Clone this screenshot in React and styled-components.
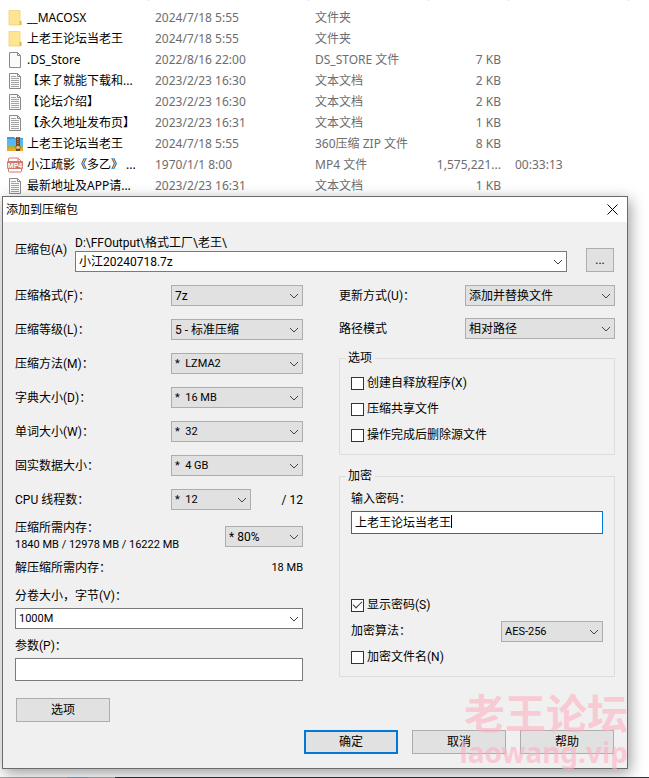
import React, { useId, useState } from 'react';
import styled, { createGlobalStyle, css } from 'styled-components';

const GlobalStyle = createGlobalStyle`
  * {
    box-sizing: border-box;
  }

  body {
    margin: 0;
    background: #fff;
    color: #000;
    font-family: Roboto, "Noto Sans CJK SC", sans-serif;
    font-size: 12px;
    line-height: 16px;
  }

  input, select, button {
    font: inherit;
    color: inherit;
  }
`;

const Page = styled.div`
  overflow: hidden;
`;

/* ---- file list ---- */

const HeaderEdge = styled.div`
  display: grid;
  grid-template-columns: 149px 160px 120px 80px 120px;
  height: 7px;
`;

const Tick = styled.span`
  height: 1px;
  border-right: 1px solid #d9d9d9;
`;

const FileTable = styled.table`
  width: 100%;
  table-layout: fixed;
  border-collapse: collapse;
  font-family: "Noto Sans", "Noto Sans CJK SC", sans-serif;
  line-height: 20px;
`;

const Col = styled.col`
  width: ${({ $width }) => $width};
`;

const Cell = styled.td`
  height: 21px;
  padding: 0 7px;
  color: #6d6d6d;
  white-space: nowrap;
  text-align: ${({ $align }) => $align || 'left'};
`;

const NameCell = styled(Cell)`
  color: #000;
`;

const FileName = styled.span`
  display: flex;
  align-items: center;
  gap: 4px;
`;

const FileIcon = styled.svg`
  flex: none;
  width: 16px;
  height: 16px;
`;

/* ---- dialog ---- */

const Dialog = styled.section`
  position: relative;
  margin: 0 21px 8px 2px;
  background: #f0f0f0;
  border: 1px solid #6b6b6b;
  box-shadow: 2px 4px 14px rgba(0, 0, 0, 0.4);
`;

const TitleBar = styled.header`
  display: flex;
  align-items: center;
  justify-content: space-between;
  height: 25px;
  padding: 0 9px 0 3px;
  background: #fff;
`;

const Title = styled.h1`
  margin: 0;
  font-size: 12px;
  font-weight: 400;
`;

const CloseButton = styled.button`
  display: flex;
  padding: 0;
  border: 0;
  background: none;
`;

const Form = styled.form`
  padding: 13px 12px 14px;
`;

const ArchiveRow = styled.div`
  display: flex;
  align-items: flex-end;
  padding-right: 1px;
`;

const ArchiveLabel = styled.label`
  width: 60px;
  align-self: flex-start;
  line-height: 30px;
`;

const ArchiveField = styled.div`
  flex: 1;
  margin-right: 19px;
`;

const Columns = styled.div`
  display: grid;
  grid-template-columns: 288fr 276fr;
  gap: 36px;
  margin-top: 6px;
`;

const Column = styled.div`
  display: flex;
  flex-direction: column;
`;

const Row = styled.div`
  display: flex;
  justify-content: space-between;
  height: ${({ $height }) => $height || 34}px;
  padding-top: 7px;
  line-height: 22px;
`;

const SplitRow = styled.div`
  display: flex;
  align-items: center;
  justify-content: space-between;
  margin-top: ${({ $gap }) => $gap || 0}px;
`;

const ThreadGroup = styled.div`
  display: flex;
  justify-content: space-between;
  width: 132px;
`;

const Small = styled.span`
  font-size: 11px;
`;

const SelectBox = styled.span`
  position: relative;
  display: block;
  flex: none;
  width: ${({ $width }) => $width || '100%'};
  height: 21px;
`;

const StyledSelect = styled.select`
  display: block;
  appearance: none;
  width: 100%;
  height: 21px;
  padding: 1px 20px 0 3px;
  border: 1px solid #adadad;
  border-radius: 0;
  outline: 0;
  background: #e1e1e1;
  font-size: ${({ $small }) => ($small ? 11 : 12)}px;
  line-height: 18px;

  ${({ $editable }) => $editable && css`
    background: #fff;
    border-color: #7a7a7a;
  `}
`;

const Chevron = styled.svg`
  position: absolute;
  top: 8px;
  right: 4px;
  width: 10px;
  height: 6px;
  pointer-events: none;
`;

const TextInput = styled.input`
  display: block;
  width: 100%;
  height: 23px;
  padding: 0 3px 2px;
  border: 1px solid ${({ $active }) => ($active ? '#0078d7' : '#7a7a7a')};
  border-radius: 0;
  outline: 0;
  background: #fff;
  caret-color: transparent;
`;

const InputWrap = styled.div`
  position: relative;
`;

const Caret = styled.span`
  position: absolute;
  top: 4px;
  left: calc(4px + 8em);
  width: 1px;
  height: 13px;
  background: #000;
`;

const Field = styled.div`
  display: flex;
  flex-direction: column;
  gap: 4px;
  margin-top: ${({ $gap }) => $gap}px;
`;

const Group = styled.fieldset`
  min-width: 0;
  margin: ${({ $gap }) => $gap}px 0 0;
  padding: 4px 11px 6px;
  border: 1px solid #dcdcdc;
`;

const Legend = styled.legend`
  margin-left: -5px;
  padding: 0 3px 0 2px;
`;

const CheckLabel = styled.label`
  display: flex;
  align-items: center;
  gap: 3px;
  height: 26px;
`;

const CheckBox = styled.input`
  appearance: none;
  flex: none;
  width: 13px;
  height: 13px;
  margin: 0;
  border: 1px solid #333;
  background: #fff;
  display: grid;
  place-items: center;

  &:checked::before {
    content: "";
    width: 8px;
    height: 4px;
    margin-bottom: 3px;
    border: solid #333;
    border-width: 0 0 1px 1px;
    transform: rotate(-45deg);
  }
`;

const AlgorithmRow = styled(SplitRow)`
  height: 26px;
`;

const Button = styled.button`
  width: ${({ $width }) => $width || 94}px;
  height: 24px;
  padding: 0;
  border: ${({ $primary }) => ($primary ? '2px solid #0078d7' : '1px solid #adadad')};
  background: #e1e1e1;
`;

const OptionsBar = styled.div`
  padding: 17px 0 0 1px;
`;

const Footer = styled.footer`
  display: flex;
  justify-content: flex-end;
  gap: 14px;
  margin-top: 8px;
  padding-right: 1px;
`;

const Watermark = styled.div`
  position: absolute;
  right: -1px;
  bottom: -4px;
  color: rgba(255, 176, 194, 0.6);
  font-weight: 700;
  text-align: right;
  pointer-events: none;
`;

const WatermarkName = styled.div`
  font-family: "Noto Sans CJK SC", sans-serif;
  font-size: 41px;
  line-height: 42px;
`;

const WatermarkSite = styled.div`
  font-family: "Noto Sans", sans-serif;
  font-size: 28px;
  line-height: 40px;
`;

const Taskbar = styled.div`
  height: 1px;
  background: linear-gradient(to right, #a9a9a9 67px, #7f9db5 67px 88px, #a9a9a9 88px 115px, #2c3437 115px);
`;

/* ---- icons ---- */

const FolderIcon = () => (
  <FileIcon viewBox="0 0 16 16">
    <path d="M2 .5h11v9.5l1.5 1V15H2z" fill="#ffe591" />
    <path d="M2 .5h11v14.5H2z" fill="none" stroke="#f0d275" strokeWidth=".8" />
    <path d="M12.5 11h2v4h-2z" fill="#e8bf4d" />
  </FileIcon>
);

const PageIcon = ({ lines }) => (
  <FileIcon viewBox="0 0 16 16">
    <path d="M2.5.5h8l3 3v12h-11z" fill="#fafafa" stroke="#8a8a8a" />
    <path d="M10.5.5v3h3" fill="none" stroke="#8a8a8a" />
    {lines && <path d="M4 3.5h5M4 5.500h8M4 7.500h8M4 9.500h8M4 11.500h8M4 13.500h8" stroke="#a3a3a3" />}
  </FileIcon>
);

const ZipIcon = () => (
  <FileIcon viewBox="0 0 16 16">
    <path d="M0 1h7l1 1h8v8H0z" fill="#3c9be0" />
    <path d="M0 3h16v7H0z" fill="#56b9f5" />
    <path d="M0 10h16v2H0z" fill="#8ac43f" />
    <path d="M0 12h16v3H0z" fill="#eda52d" />
    <path d="M9 1h4v14H9z" fill="#7a4a25" />
    <path d="M11 1v9" stroke="#d8b070" strokeDasharray="1 1" />
    <path d="M9 10h4v3H9z" fill="#f6dc8a" stroke="#6b4520" strokeWidth=".6" />
  </FileIcon>
);

const Mp4Icon = () => (
  <FileIcon viewBox="0 0 16 16">
    <path d="M1.5 5V2a1 1 0 0 1 1-1H11l3.5 3.5V5M1.500 11v3a1 1 0 0 0 1 1h11a1 1 0 0 0 1-1v-3" fill="#fff" stroke="#d3796a" />
    <path d="M11 1v3.5h3.500" fill="none" stroke="#d3796a" />
    <rect y="4" width="16" height="8" rx="1" fill="#d3796a" />
    <text x="8" y="10.500" fontSize="7" fontWeight="700" fontFamily="Liberation Sans, sans-serif" textAnchor="middle" fill="#fff">MP4</text>
  </FileIcon>
);

const icons = {
  folder: <FolderIcon />,
  blank: <PageIcon />,
  text: <PageIcon lines />,
  zip: <ZipIcon />,
  mp4: <Mp4Icon />,
};

const files = [
  { icon: 'folder', name: '__MACOSX', date: '2024/7/18 5:55', type: '文件夹' },
  { icon: 'folder', name: '上老王论坛当老王', date: '2024/7/18 5:55', type: '文件夹' },
  { icon: 'blank', name: '.DS_Store', date: '2022/8/16 22:00', type: 'DS_STORE 文件', size: '7 KB' },
  { icon: 'text', name: '【来了就能下载和...', date: '2023/2/23 16:30', type: '文本文档', size: '2 KB' },
  { icon: 'text', name: '【论坛介绍】', date: '2023/2/23 16:30', type: '文本文档', size: '2 KB' },
  { icon: 'text', name: '【永久地址发布页】', date: '2023/2/23 16:31', type: '文本文档', size: '1 KB' },
  { icon: 'zip', name: '上老王论坛当老王', date: '2024/7/18 5:55', type: '360压缩 ZIP 文件', size: '8 KB' },
  { icon: 'mp4', name: '小江疏影《多乙》 ...', date: '1970/1/1 8:00', type: 'MP4 文件', size: '1,575,221...', length: '00:33:13' },
  { icon: 'text', name: '最新地址及APP请...', date: '2023/2/23 16:31', type: '文本文档', size: '1 KB' },
];

const compression = [
  { label: '压缩格式(F)：', value: '7z' },
  { label: '压缩等级(L)：', value: '5 - 标准压缩' },
  { label: '压缩方法(M)：', value: '*\u00a0\u00a0LZMA2', small: true },
  { label: '字典大小(D)：', value: '*\u00a0\u00a016 MB', small: true },
  { label: '单词大小(W)：', value: '*\u00a0\u00a032', small: true },
  { label: '固实数据大小：', value: '*\u00a0\u00a04 GB', small: true },
];

const Select = ({ id, value, width, small, editable }) => (
  <SelectBox $width={width}>
    <StyledSelect id={id} $small={small} $editable={editable}>
      <option>{value}</option>
    </StyledSelect>
    <Chevron viewBox="0 0 10 6">
      <path d="M1 1l4 4 4-4" fill="none" stroke="#444" />
    </Chevron>
  </SelectBox>
);

const SelectRow = ({ label, value, width, small, height }) => {
  const id = useId();
  return (
    <Row $height={height}>
      <label htmlFor={id}>{label}</label>
      <Select id={id} value={value} width={width} small={small} />
    </Row>
  );
};

const Check = ({ label, defaultChecked }) => (
  <CheckLabel>
    <CheckBox type="checkbox" defaultChecked={defaultChecked} />
    {label}
  </CheckLabel>
);

const FileList = () => (
  <>
    <HeaderEdge>
      <Tick /><Tick /><Tick /><Tick /><Tick />
    </HeaderEdge>
    <FileTable>
      <colgroup>
        <Col $width="148px" />
        <Col $width="160px" />
        <Col $width="120px" />
        <Col $width="80px" />
        <Col $width="auto" />
      </colgroup>
      <tbody>
        {files.map((file, i) => (
          <tr key={i}>
            <NameCell>
              <FileName>{icons[file.icon]}{file.name}</FileName>
            </NameCell>
            <Cell>{file.date}</Cell>
            <Cell>{file.type}</Cell>
            <Cell $align="right">{file.size}</Cell>
            <Cell>{file.length}</Cell>
          </tr>
        ))}
      </tbody>
    </FileTable>
  </>
);

const App = () => {
  const [password, setPassword] = useState('上老王论坛当老王');
  const [params, setParams] = useState('');

  return (
    <Page>
      <GlobalStyle />
      <FileList />
      <Dialog role="dialog" aria-labelledby="dialog-title">
        <TitleBar>
          <Title id="dialog-title">添加到压缩包</Title>
          <CloseButton type="button">
            <svg width="11" height="11" viewBox="0 0 11 11">
              <path d="M.5.5l10 10M10.5.5l-10 10" stroke="#000" />
            </svg>
          </CloseButton>
        </TitleBar>
        <Form onSubmit={e => e.preventDefault()}>
          <ArchiveRow>
            <ArchiveLabel htmlFor="archive">压缩包(A)</ArchiveLabel>
            <ArchiveField>
              <div>D:\FFOutput\格式工厂\老王\</div>
              <Select id="archive" value="小江20240718.7z" editable />
            </ArchiveField>
            <Button type="button" $width={28}>...</Button>
          </ArchiveRow>

          <Columns>
            <Column>
              {compression.map(item => (
                <SelectRow key={item.label} width="132px" {...item} />
              ))}
              <Row>
                <label htmlFor="threads">CPU 线程数：</label>
                <ThreadGroup>
                  <Select id="threads" value={'*\u00a0\u00a012'} width="80px" small />
                  <span>/ 12</span>
                </ThreadGroup>
              </Row>
              <SplitRow $gap={4}>
                <label htmlFor="memory">
                  <div>压缩所需内存：</div>
                  <Small>1840 MB / 12978 MB / 16222 MB</Small>
                </label>
                <Select id="memory" value="* 80%" width="78px" />
              </SplitRow>
              <SplitRow $gap={7}>
                <span>解压缩所需内存：</span>
                <Small>18 MB</Small>
              </SplitRow>
              <Field $gap={12}>
                <label htmlFor="volume">分卷大小，字节(V)：</label>
                <Select id="volume" value="1000M" small editable />
              </Field>
              <Field $gap={9}>
                <label htmlFor="params">参数(P)：</label>
                <TextInput id="params" value={params} onChange={e => setParams(e.target.value)} />
              </Field>
            </Column>

            <Column>
              <SelectRow label="更新方式(U)：" value="添加并替换文件" width="150px" height={33} />
              <SelectRow label="路径模式" value="相对路径" width="150px" height={33} />
              <Group $gap={6}>
                <Legend>选项</Legend>
                <Check label="创建自释放程序(X)" />
                <Check label="压缩共享文件" />
                <Check label="操作完成后删除源文件" />
              </Group>
              <Group $gap={13}>
                <Legend>加密</Legend>
                <Field $gap={3}>
                  <label htmlFor="password">输入密码：</label>
                  <InputWrap>
                    <TextInput
                      id="password"
                      $active
                      value={password}
                      onChange={e => setPassword(e.target.value)}
                    />
                    <Caret />
                  </InputWrap>
                </Field>
                <Field $gap={58}>
                  <div>
                    <Check label="显示密码(S)" defaultChecked />
                    <AlgorithmRow>
                      <label htmlFor="algorithm">加密算法：</label>
                      <Select id="algorithm" value="AES-256" width="102px" small />
                    </AlgorithmRow>
                    <Check label="加密文件名(N)" />
                  </div>
                </Field>
              </Group>
            </Column>
          </Columns>

          <OptionsBar>
            <Button type="button">选项</Button>
          </OptionsBar>
          <Footer>
            <Button type="submit" $primary>确定</Button>
            <Button type="button">取消</Button>
            <Button type="button">帮助</Button>
          </Footer>
        </Form>
        <Watermark aria-hidden="true">
          <WatermarkName>老王论坛</WatermarkName>
          <WatermarkSite>laowang.vip</WatermarkSite>
        </Watermark>
      </Dialog>
      <Taskbar />
    </Page>
  );
};

export default App;
